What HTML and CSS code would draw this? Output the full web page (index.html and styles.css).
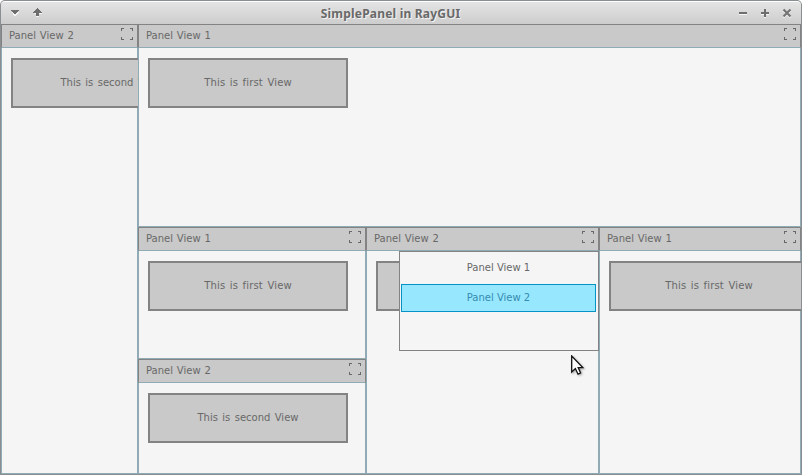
FILE: index.html
```html
<!DOCTYPE html>
<html lang="en">
<head>
<meta charset="utf-8">
<title>SimplePanel in RayGUI</title>
<link rel="stylesheet" href="styles.css">
</head>
<body>
<svg class="defs" width="0" height="0">
  <symbol id="expand" viewBox="0 0 12 12"><path d="M0 0h3v1H1v2H0zM9 0h3v3h-1V1H9zM0 9h1v2h2v1H0zM11 9h1v3H9v-1h2z"/></symbol>
</svg>
<div class="window">
  <header class="titlebar">
    <svg class="tools" width="40" height="12" viewBox="0 0 40 12" shape-rendering="crispEdges">
      <path fill="#f4f4f4" d="M2 5h7L6 9H4zM24 6h8v1H24zM26 9h3v1H26z"/>
      <path d="M1 3h8v1H8v1H7v1H6v1H4V6H3V5H2V4H1z"/>
      <path d="M27 1h1v1h1v1h1v1h1v1h1v1H29v3H26V6H23V5h1V4h1V3h1V2h1z"/>
    </svg>
    <h1 class="title">SimplePanel in RayGUI</h1>
    <svg class="tools" width="54" height="12" viewBox="0 0 54 12">
      <g class="shine"><path d="M1 6h8v2H1zM23 6h3V3h2v3h3v2h-3v3h-2V8h-3z"/><path class="cross" d="M45.500 3.500l7 7M52.500 3.500l-7 7"/></g>
      <path d="M1 5h8v2H1zM23 5h3V2h2v3h3v2h-3v3h-2V7h-3z"/><path class="cross" d="M45.500 2.500l7 7M52.500 2.500l-7 7"/>
    </svg>
  </header>
  <main class="workspace">
    <section class="panel side">
      <div class="bar"><span>Panel View 2</span><svg class="expand"><use href="#expand"/></svg></div>
      <button class="view second">This is second View</button>
    </section>
    <section class="panel top">
      <div class="bar"><span>Panel View 1</span><svg class="expand"><use href="#expand"/></svg></div>
      <button class="view">This is first View</button>
    </section>
    <div class="stack">
      <section class="panel">
        <div class="bar"><span>Panel View 1</span><svg class="expand"><use href="#expand"/></svg></div>
        <button class="view">This is first View</button>
      </section>
      <section class="panel">
        <div class="bar"><span>Panel View 2</span><svg class="expand"><use href="#expand"/></svg></div>
        <button class="view second">This is second View</button>
      </section>
    </div>
    <section class="panel">
      <div class="bar"><span>Panel View 2</span><svg class="expand"><use href="#expand"/></svg></div>
      <button class="view"></button>
      <div class="menu">
        <div class="item">Panel View 1</div>
        <div class="item selected">Panel View 2</div>
      </div>
    </section>
    <section class="panel">
      <div class="bar"><span>Panel View 1</span><svg class="expand"><use href="#expand"/></svg></div>
      <button class="view">This is first View</button>
    </section>
  </main>
  <svg class="cursor" width="16" height="24" viewBox="0 0 16 24">
    <path d="M.7 1v16l3.700-3.500L7 19.200l2.600-1.200L7.200 12.600h4.600z"/>
  </svg>
</div>
</body>
</html>
```

FILE: styles.css
```css
* { box-sizing: border-box; }
body { margin: 0; background: #fff; }
.defs { position: absolute; }
.window {
  position: relative;
  width: 802px;
  height: 475px;
  padding: 1px;
  background: #8b8e90;
  border-radius: 5px 5px 0 0;
  overflow: hidden;
}
.titlebar {
  display: flex;
  align-items: center;
  justify-content: space-between;
  height: 23px;
  padding: 0 9px 0 9px;
  border-top: 1px solid #fff;
  border-radius: 4px 4px 0 0;
  background: linear-gradient(#e4e4e4, #cdcdcd);
}
.tools { fill: #6e6e6e; stroke: none; }
.tools .shine { fill: #f6f6f6; }
.tools .cross { fill: none; stroke: #757575; stroke-width: 2.2; }
.tools .shine .cross { stroke: #f6f6f6; }
.title {
  margin: 2px 7px 0 0;
  font: bold 12px/22px "Noto Sans", sans-serif;
  letter-spacing: .2px;
  color: #696969;
  text-shadow: 1px 1px 0 #f2f2f2;
  white-space: nowrap;
}
.workspace {
  display: grid;
  grid-template-columns: 137px 228px 233px 202px;
  grid-template-rows: 203px 247px;
  width: 800px;
  height: 450px;
  overflow: hidden;
  font: 10px/12px "DejaVu Sans", sans-serif;
  color: #686868;
}
.side { grid-row: 1 / 3; }
.top { grid-column: 2 / 5; }
.stack { display: grid; grid-template-rows: 132px 115px; }
.panel {
  position: relative;
  min-width: 0;
  overflow: hidden;
  background: #f5f5f5;
  box-shadow: inset 0 0 0 1px #90abb5;
}
.bar {
  display: flex;
  justify-content: space-between;
  height: 24px;
  padding: 4px 4px 0 7px;
  border: 1px solid #838383;
  border-bottom-color: #90abb5;
  background: #c9c9c9;
  word-spacing: .7px;
}
.bar span { padding-top: 1px; }
.expand { width: 12px; height: 12px; fill: #686868; margin-top: -1px; }
.view {
  display: block;
  width: 200px;
  height: 50px;
  margin: 10px 0 0 10px;
  padding: 0;
  border: 2px solid #838383;
  background: #c9c9c9;
  font: inherit;
  letter-spacing: .15px;
  word-spacing: 1.2px;
  color: inherit;
}
.second { letter-spacing: 0; word-spacing: 1.2px; }
.menu {
  position: absolute;
  top: 24px;
  right: 0;
  width: 200px;
  height: 100px;
  padding: 2px 2px 0 1px;
  border: 1px solid #838383;
  background: #f5f5f5;
}
.item {
  width: 195px;
  height: 28px;
  margin-bottom: 2px;
  border: 1px solid transparent;
  line-height: 26px;
  text-align: center;
}
.selected { border-color: #0492c7; background: #97e8ff; color: #368baf; }
.cursor { position: absolute; left: 571px; top: 355px; fill: #fff; stroke: #111; stroke-width: 1.3; filter: drop-shadow(1px 1px 1px #0005); }
```
